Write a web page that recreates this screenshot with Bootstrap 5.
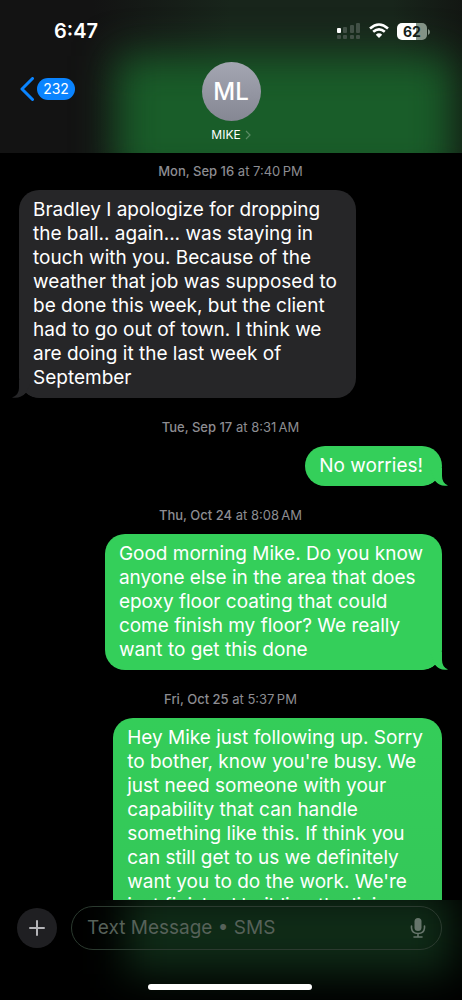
<!DOCTYPE html>
<html lang="en">
<head>
<meta charset="utf-8">
<meta name="viewport" content="width=device-width, initial-scale=1">
<title>Messages - Mike</title>
<link href="https://cdn.jsdelivr.net/npm/bootstrap@5.3.0/dist/css/bootstrap.min.css" rel="stylesheet">
<style>
  body { font-family: Inter, "Liberation Sans", sans-serif; background: #000; color: #fff; }
  .glow { position: relative; isolation: isolate; overflow: hidden; }
  .glow::before { content: ""; position: absolute; z-index: -1; }
  .top-bar { background: linear-gradient(90deg, #131313 20%, #18251b 50%, #18251b 85%, #131713); padding-bottom: 10px; }
  .top-bar::before { left: 25%; right: 2%; top: 56px; bottom: -30px; background: #195d29; filter: blur(20px); }
  .status-bar { padding: 19px 32px 0 54px; height: 62px; }
  .clock { font-size: 20px; line-height: 24px; font-weight: 600; }
  .battery { width: 30px; height: 17px; border-radius: 5px; background: linear-gradient(90deg, #fff 62%, #839386 62%); color: #142018; font-size: 14px; line-height: 17px; font-weight: 700; }
  .contact-row { display: grid; grid-template-columns: 1fr auto 1fr; padding: 0 20px; }
  .back-btn { margin-top: 15px; gap: 3px; }
  .unread { background: #0a84ff; color: #fff; font-size: 14px; line-height: 22px; border-radius: 11px; width: 38px; }
  .avatar { width: 59px; height: 59px; font-size: 24px; font-weight: 500; background: linear-gradient(#a4a6b2, #858793); }
  .contact-name { font-size: 12px; line-height: 16px; margin-top: 6px; }
  .thread { min-height: 0; padding: 0 20px 0 19px; }
  .stamp { font-size: 13px; line-height: 18px; padding: 20px 0 10px; color: #8d8d92; }
  .stamp:first-child { padding-top: 9px; }
  .stamp b { font-weight: 500; }
  .bubble { position: relative; font-size: 19px; line-height: 24px; padding: 8px 19px 8px 14px; border-radius: 20px; }
  .received { background: #262628; }
  .sent { background: #34cf5a; }
  .sent.latest { background: linear-gradient(#34cd59, #34c759); }
  .tail { position: absolute; bottom: 0; width: 24px; height: 18px; }
  .received .tail { left: -7px; color: #262628; }
  .sent .tail { right: -6px; color: #34cf5a; transform: scaleX(-1); }
  .compose { background: #000; padding: 6px 20px 0 17px; height: 100px; }
  .compose::before { left: 27%; right: 2%; top: -10px; bottom: 26px; background: #0f2b17; filter: blur(20px); }
  .compose-row { gap: 14px; }
  .add-btn { width: 40px; height: 40px; background: #1f1f22; }
  .field { height: 44px; border: 1px solid #2b3a2f; border-radius: 22px; padding: 0 14px 0 15px; }
  .field input { font-size: 19px; color: #fff; background: none; outline: 0; min-width: 0; }
  .field input::placeholder { color: #566159; opacity: 1; }
  .home-bar { width: 164px; height: 6px; background: #fff; margin-top: 34px; }
</style>
</head>
<body>
<div class="vh-100 d-flex flex-column overflow-hidden">
  <header class="top-bar glow flex-shrink-0">
    <div class="status-bar d-flex justify-content-between">
      <span class="clock">6:47</span>
      <div class="d-flex align-items-start gap-2 pt-1">
        <svg width="24" height="16" viewBox="0 0 24 16" fill="#425046" role="img" aria-label="Signal"><rect x="0" y="5" width="4" height="5" rx="1" fill="#fff"/><rect x="6" y="4" width="4" height="6" rx="1"/><rect x="13" y="2" width="4" height="8" rx="1"/><rect x="19" y="0" width="4" height="10" rx="1"/><rect x="0" y="12" width="4" height="4" rx="1"/><rect x="6" y="12" width="4" height="4" rx="1"/><rect x="13" y="12" width="4" height="4" rx="1"/><rect x="19" y="12" width="4" height="4" rx="1"/></svg>
        <svg width="20" height="16" viewBox="0 0 20 16" fill="none" stroke="#fff" stroke-width="2.6" role="img" aria-label="Wi-Fi"><path d="M1 5.4Q10-2.4 19 5.4M4.2 8.8Q10 3.8 15.800 8.800"/><path d="M10 15 6.8 11.700Q10 9 13.200 11.700Z" fill="#fff" stroke="none"/></svg>
        <div class="d-flex align-items-center">
          <div class="battery text-center">62</div>
          <svg width="3" height="6" viewBox="0 0 3 6" fill="#839386"><path d="M1 0Q3 1 3 3T1 6Z"/></svg>
        </div>
      </div>
    </div>
    <div class="contact-row">
      <button type="button" class="back-btn btn p-0 border-0 d-flex align-items-center align-self-start" aria-label="Back, 232 unread">
        <svg width="14" height="24" viewBox="0 0 14 24" fill="none" stroke="#0a84ff" stroke-width="3" stroke-linecap="round" stroke-linejoin="round"><path d="M12.500 1.500 2 12 12.500 22.500"/></svg>
        <span class="unread">232</span>
      </button>
      <a href="#" class="text-white text-decoration-none d-flex flex-column align-items-center">
        <span class="avatar rounded-circle d-flex align-items-center justify-content-center">ML</span>
        <span class="contact-name d-flex align-items-center gap-1">MIKE
          <svg width="6" height="10" viewBox="0 0 6 10" fill="none" stroke="#5a8a63" stroke-width="1.2"><path d="M1 1l4 4-4 4"/></svg>
        </span>
      </a>
    </div>
  </header>

  <main class="thread flex-grow-1 overflow-hidden d-flex flex-column">
    <div class="stamp text-center"><b>Mon, Sep 16</b> at 7:40&#8201;PM</div>
    <div class="bubble received align-self-start">Bradley I apologize for dropping<br>the ball.. again... was staying in<br>touch with you. Because of the<br>weather that job was supposed to<br>be done this week, but the client<br>had to go out of town. I think we<br>are doing it the last week of<br>September<svg class="tail" viewBox="0 0 24 18"><path d="M7 0V8Q7 15 0 17.500Q8 19 14 13L20 0Z" fill="currentColor"/><path d="M8 18Q12 16 14 13Q18 17 24 18Z" fill="#000"/></svg></div>
    <div class="stamp text-center"><b>Tue, Sep 17</b> at 8:31&#8201;AM</div>
    <div class="bubble sent align-self-end">No worries!<svg class="tail" viewBox="0 0 24 18"><path d="M6 0V8Q6 15 0 17.500Q8 19 13 13L18 0Z" fill="currentColor"/><path d="M7 18Q11 16 13 13Q17 17 24 18Z" fill="#000"/></svg></div>
    <div class="stamp text-center"><b>Thu, Oct 24</b> at 8:08&#8201;AM</div>
    <div class="bubble sent align-self-end">Good morning Mike. Do you know<br>anyone else in the area that does<br>epoxy floor coating that could<br>come finish my floor? We really<br>want to get this done<svg class="tail" viewBox="0 0 24 18"><path d="M6 0V8Q6 15 0 17.500Q8 19 13 13L18 0Z" fill="currentColor"/><path d="M7 18Q11 16 13 13Q17 17 24 18Z" fill="#000"/></svg></div>
    <div class="stamp text-center"><b>Fri, Oct 25</b> at 5:37&#8201;PM</div>
    <div class="bubble sent latest align-self-end">Hey Mike just following up. Sorry<br>to bother, know you're busy. We<br>just need someone with your<br>capability that can handle<br>something like this. If think you<br>can still get to us we definitely<br>want you to do the work. We're<br>just finished building the living</div>
  </main>

  <footer class="compose glow flex-shrink-0">
    <div class="compose-row d-flex align-items-center">
      <button type="button" class="add-btn btn p-0 border-0 rounded-circle d-flex align-items-center justify-content-center flex-shrink-0" aria-label="Add attachment">
        <svg width="16" height="16" viewBox="0 0 16 16" stroke="#b4b4b8" stroke-width="2" stroke-linecap="round"><path d="M8 1v14M1 8h14"/></svg>
      </button>
      <div class="field d-flex align-items-center flex-grow-1">
        <input type="text" class="border-0 p-0 flex-grow-1" placeholder="Text Message • SMS" aria-label="Text Message">
        <button type="button" class="btn p-0 border-0 d-flex" aria-label="Dictate">
          <svg width="18" height="20" viewBox="0 0 18 20" fill="none" stroke="#66756b" stroke-width="1.6" stroke-linecap="round"><rect x="5.500" y="0" width="7" height="13" rx="3.500" fill="#66756b" stroke="none"/><path d="M2.500 8v2Q3 15.500 9 15.500T15.500 10V8M9 15.500V19M5 19h8"/></svg>
        </button>
      </div>
    </div>
    <div class="home-bar rounded-pill mx-auto"></div>
  </footer>
</div>
<script src="https://cdn.jsdelivr.net/npm/bootstrap@5.3.0/dist/js/bootstrap.bundle.min.js"></script>
</body>
</html>
